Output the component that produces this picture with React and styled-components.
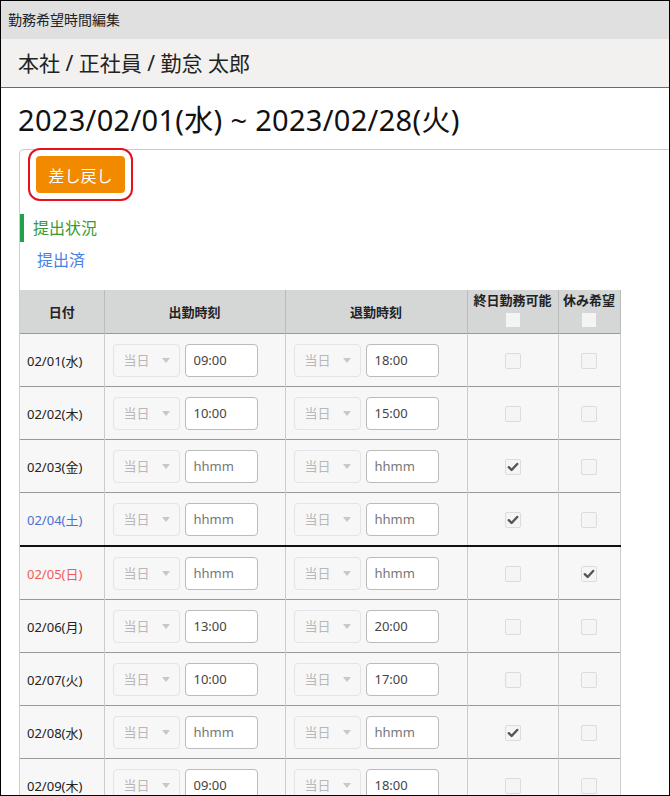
import React from "react";
import styled, { createGlobalStyle, css } from "styled-components";

const GlobalStyle = createGlobalStyle`
  html, body {
    margin: 0;
    padding: 0;
    background: #fff;
  }
  body {
    font-family: "Noto Sans", "Noto Sans CJK JP", sans-serif;
    color: #222;
  }
`;

const rows = [
  { date: "02/01(水)", start: "09:00", end: "18:00" },
  { date: "02/02(木)", start: "10:00", end: "15:00" },
  { date: "02/03(金)", start: "", end: "", allDay: true },
  { date: "02/04(土)", start: "", end: "", allDay: true, day: "sat" },
  { date: "02/05(日)", start: "", end: "", off: true, day: "sun" },
  { date: "02/06(月)", start: "13:00", end: "20:00" },
  { date: "02/07(火)", start: "10:00", end: "17:00" },
  { date: "02/08(水)", start: "", end: "", allDay: true },
  { date: "02/09(木)", start: "09:00", end: "18:00" },
  { date: "02/10(金)", start: "09:00", end: "18:00" },
];

export default function App() {
  return (
    <>
      <GlobalStyle />
      <Frame>
        <TitleBar>勤務希望時間編集</TitleBar>
        <Breadcrumb>本社 / 正社員 / 勤怠 太郎</Breadcrumb>
        <Period>2023/02/01(水) ~ 2023/02/28(火)</Period>
        <Card>
          <ButtonRow>
            <ReturnButton>差し戻し</ReturnButton>
          </ButtonRow>
          <StatusLabel>提出状況</StatusLabel>
          <StatusValue>提出済</StatusValue>
          <Table>
            <colgroup>
              <col style={{ width: 84 }} />
              <col style={{ width: 181 }} />
              <col style={{ width: 182 }} />
              <col style={{ width: 91 }} />
              <col style={{ width: 62 }} />
            </colgroup>
            <thead>
              <tr>
                <Th>日付</Th>
                <Th>出勤時刻</Th>
                <Th>退勤時刻</Th>
                <Th $stacked>
                  終日勤務可能
                  <HeadBox />
                </Th>
                <Th $stacked>
                  休み希望
                  <HeadBox />
                </Th>
              </tr>
            </thead>
            <tbody>
              {rows.map((r) => (
                <Row key={r.date} $weekStart={r.day === "sun"}>
                  <DateCell $day={r.day}>{r.date}</DateCell>
                  <Td>
                    <TimeGroup>
                      <DaySelect>
                        当日
                        <Caret />
                      </DaySelect>
                      <TimeInput readOnly value={r.start} placeholder="hhmm" />
                    </TimeGroup>
                  </Td>
                  <Td>
                    <TimeGroup>
                      <DaySelect>
                        当日
                        <Caret />
                      </DaySelect>
                      <TimeInput readOnly value={r.end} placeholder="hhmm" />
                    </TimeGroup>
                  </Td>
                  <CheckCell>
                    <Check checked={r.allDay} />
                  </CheckCell>
                  <CheckCell>
                    <Check checked={r.off} />
                  </CheckCell>
                </Row>
              ))}
            </tbody>
          </Table>
        </Card>
      </Frame>
    </>
  );
}

function Check({ checked }) {
  return (
    <Box>
      {checked && (
        <svg width="12" height="12" viewBox="0 0 12 12">
          <path
            d="M1.8 6.2 L4.6 9 L10.2 3"
            fill="none"
            stroke="#555"
            strokeWidth="2.4"
            strokeLinecap="round"
            strokeLinejoin="round"
          />
        </svg>
      )}
    </Box>
  );
}

const Frame = styled.div`
  width: 670px;
  height: 796px;
  box-sizing: border-box;
  border: 1px solid #000;
  overflow: hidden;
`;

const TitleBar = styled.div`
  height: 38px;
  line-height: 38px;
  padding-left: 7px;
  background: #e0e0e0;
  font-size: 14px;
  color: #222;
`;

const Breadcrumb = styled.div`
  height: 48px;
  line-height: 48px;
  padding-left: 17px;
  background: #f2f1ef;
  border-bottom: 1px solid #3b8a4b;
  font-size: 21px;
  color: #222;
`;

const Period = styled.h1`
  margin: 12px 0 0;
  padding-left: 17px;
  height: 40px;
  line-height: 40px;
  font-size: 29px;
  letter-spacing: 0.3px;
  font-weight: normal;
  color: #111;
`;

const Card = styled.div`
  margin: 9px 0 0 18px;
  border-top: 1px solid #ccc;
  border-left: 1px solid #ccc;
  border-top-left-radius: 5px;
`;

const ButtonRow = styled.div`
  padding: 6px 0 0 16px;
`;

const ReturnButton = styled.button`
  width: 89px;
  height: 37px;
  border: none;
  border-radius: 4px;
  background: #f28a00;
  color: #fff;
  font-family: inherit;
  font-size: 16px;
  outline: 2px solid #e8101c;
  outline-offset: 6px;
`;

const StatusLabel = styled.div`
  margin-top: 21px;
  height: 28px;
  line-height: 28px;
  border-left: 4px solid #22a04c;
  padding-left: 9px;
  font-size: 16px;
  color: #3c9a2c;
`;

const StatusValue = styled.div`
  margin-top: 4px;
  height: 28px;
  line-height: 28px;
  padding-left: 17px;
  font-size: 16px;
  color: #4a7fe6;
`;

const Table = styled.table`
  margin-top: 16px;
  width: 600px;
  border-collapse: collapse;
  table-layout: fixed;
  font-size: 13px;
`;

const Th = styled.th`
  height: 42px;
  padding: 0;
  background: #d5d6d6;
  border-left: 1px solid #bbb;
  border-right: 1px solid #bbb;
  font-size: 13px;
  font-weight: bold;
  color: #222;
  text-align: center;
  vertical-align: middle;
  &:first-child {
    border-left: none;
  }
  ${(p) =>
    p.$stacked &&
    css`
      vertical-align: top;
      padding-top: 1px;
      line-height: 18px;
      white-space: nowrap;
    `}
`;

const HeadBox = styled.span`
  display: block;
  width: 14px;
  height: 14px;
  margin: 4px auto 0;
  background: #f4f4f4;
`;

const Row = styled.tr`
  background: #f7f7f7;
  border-top: 1px solid #999;
  ${(p) =>
    p.$weekStart &&
    css`
      border-top: 2px solid #111;
    `}
`;

const Td = styled.td`
  height: 52px;
  padding: 0;
  border-left: 1px solid #ccc;
  border-right: 1px solid #ccc;
  vertical-align: middle;
  &:first-child {
    border-left: none;
  }
`;

const dayColors = { sat: "#4b6fd4", sun: "#f05a5a" };

const DateCell = styled(Td)`
  padding-left: 7px;
  color: ${(p) => dayColors[p.$day] || "#222"};
`;

const TimeGroup = styled.div`
  display: flex;
  align-items: center;
  gap: 5px;
  padding-left: 8px;
`;

const DaySelect = styled.div`
  position: relative;
  box-sizing: border-box;
  width: 67px;
  height: 33px;
  padding-left: 10px;
  line-height: 31px;
  border: 1px solid #e4e4e4;
  border-radius: 4px;
  background: #f7f7f7;
  color: #b8b8b8;
  font-size: 13px;
`;

const Caret = styled.span`
  position: absolute;
  right: 9px;
  top: 13px;
  border-left: 4px solid transparent;
  border-right: 4px solid transparent;
  border-top: 5px solid #c8c8c8;
`;

const TimeInput = styled.input`
  box-sizing: border-box;
  width: 73px;
  height: 33px;
  padding: 0 8px;
  border: 1px solid #bbb;
  border-radius: 4px;
  background: #fff;
  font-family: inherit;
  font-size: 13px;
  color: #444;
  outline: none;
  &::placeholder {
    color: #777;
  }
`;

const CheckCell = styled(Td)`
  text-align: center;
`;

const Box = styled.span`
  display: inline-flex;
  align-items: center;
  justify-content: center;
  box-sizing: border-box;
  width: 16px;
  height: 16px;
  border: 1px solid #dcdcdc;
  border-radius: 2px;
  background: #f5f5f5;
  vertical-align: middle;
`;
